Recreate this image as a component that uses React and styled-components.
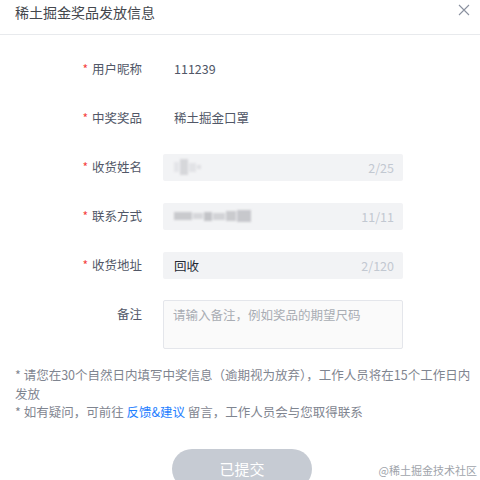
import React from "react";
import styled, { createGlobalStyle } from "styled-components";

const GlobalStyle = createGlobalStyle`
  html, body {
    margin: 0;
    padding: 0;
    background: #fff;
    overflow: hidden;
  }
  body {
    font-family: "Noto Sans CJK SC", "Noto Sans", sans-serif;
  }
`;

const Dialog = styled.div`
  position: relative;
  width: 480px;
  height: 480px;
  overflow: hidden;
  background: #fff;
`;

const Header = styled.div`
  display: flex;
  align-items: flex-start;
  justify-content: space-between;
  height: 35px;
  padding: 1px 10px 0 15px;
  box-sizing: border-box;
  border-bottom: 1px solid #e8eaed;
`;

const Title = styled.div`
  font-size: 14px;
  line-height: 22px;
  color: #44474d;
`;

const Close = styled.div`
  width: 12px;
  height: 12px;
  margin-top: 3px;
  display: flex;
`;

const Form = styled.div`
  display: flex;
  flex-direction: column;
  gap: 21px;
  padding-top: 20px;
`;

const Row = styled.div`
  display: flex;
  align-items: ${p => (p.top ? "flex-start" : "center")};
  min-height: 28px;
`;

const Label = styled.div`
  width: 150px;
  box-sizing: border-box;
  padding-right: 8px;
  text-align: right;
  font-size: 12.5px;
  line-height: 28px;
  color: #515767;
  flex-shrink: 0;
`;

const Star = styled.span`
  color: #f53f3f;
  margin-right: 4px;
  font-size: 12px;
`;

const Value = styled.div`
  margin-left: 13px;
  padding: 0 11px;
  font-size: 12.5px;
  line-height: 28px;
  color: #515767;
`;

const Field = styled.div`
  margin-left: 13px;
  width: 240px;
  height: 27px;
  box-sizing: border-box;
  padding: 0 9px 0 11px;
  border-radius: 2px;
  background: #f2f3f5;
  display: flex;
  align-items: center;
  justify-content: space-between;
  font-size: 12.5px;
  color: #252933;
`;

const Count = styled.span`
  color: #c2c8d1;
  font-size: 12.5px;
`;

const Mosaic = styled.div`
  display: flex;
  align-items: center;
  gap: 1px;
  filter: blur(0.8px);
`;

const Pixel = styled.span`
  display: inline-block;
  width: ${p => p.w}px;
  height: ${p => p.h}px;
  background: ${p => p.c};
`;

const TextArea = styled.div`
  margin-left: 13px;
  width: 240px;
  height: 49px;
  box-sizing: border-box;
  padding: 4px 9px;
  border: 1px solid #e4e6eb;
  border-radius: 2px;
  background: #fafafa;
  font-size: 12.5px;
  line-height: 20px;
  color: #a9adb4;
`;

const Notes = styled.div`
  padding: 17px 8px 0 15px;
  font-size: 12.5px;
  line-height: 18.5px;
  color: #7f8590;
`;

const Link = styled.span`
  color: #1e80ff;
`;

const Footer = styled.div`
  display: flex;
  padding: 27px 0 0 172px;
`;

const SubmitButton = styled.button`
  width: 140px;
  height: 40px;
  border: none;
  border-radius: 20px;
  background: #c6cbd3;
  color: #fff;
  font-family: inherit;
  font-size: 15px;
  line-height: 40px;
  padding: 0;
  cursor: not-allowed;
`;

const Watermark = styled.div`
  position: absolute;
  right: 3px;
  bottom: 2px;
  font-size: 11px;
  color: #a0a4ab;
`;

const nameBlocks = [
  { w: 5, h: 10, c: "#e4e5e8" },
  { w: 8, h: 16, c: "#d6d7da" },
  { w: 7, h: 9, c: "#e2e3e6" },
  { w: 4, h: 4, c: "#dfe0e3" },
];

const phoneBlocks = [
  { w: 18, h: 8, c: "#c9cacd" },
  { w: 10, h: 6, c: "#d6d7da" },
  { w: 8, h: 9, c: "#c3c4c8" },
  { w: 12, h: 7, c: "#d2d3d6" },
  { w: 10, h: 10, c: "#cacbce" },
  { w: 14, h: 12, c: "#c7c8cc" },
];

function CloseIcon() {
  return (
    <svg width="12" height="12" viewBox="0 0 12 12">
      <path d="M1 1L11 11M11 1L1 11" stroke="#8a919f" strokeWidth="1.1" />
    </svg>
  );
}

function FormRow({ label, required, children, top }) {
  return (
    <Row top={top}>
      <Label>
        {required && <Star>*</Star>}
        {label}
      </Label>
      {children}
    </Row>
  );
}

export default function App() {
  return (
    <Dialog>
      <GlobalStyle />
      <Header>
        <Title>稀土掘金奖品发放信息</Title>
        <Close>
          <CloseIcon />
        </Close>
      </Header>
      <Form>
        <FormRow label="用户昵称" required>
          <Value>111239</Value>
        </FormRow>
        <FormRow label="中奖奖品" required>
          <Value>稀土掘金口罩</Value>
        </FormRow>
        <FormRow label="收货姓名" required>
          <Field>
            <Mosaic>
              {nameBlocks.map((b, i) => <Pixel key={i} {...b} />)}
            </Mosaic>
            <Count>2/25</Count>
          </Field>
        </FormRow>
        <FormRow label="联系方式" required>
          <Field>
            <Mosaic>
              {phoneBlocks.map((b, i) => <Pixel key={i} {...b} />)}
            </Mosaic>
            <Count>11/11</Count>
          </Field>
        </FormRow>
        <FormRow label="收货地址" required>
          <Field>
            <span>回收</span>
            <Count>2/120</Count>
          </Field>
        </FormRow>
        <FormRow label="备注" top>
          <TextArea>请输入备注，例如奖品的期望尺码</TextArea>
        </FormRow>
      </Form>
      <Notes>
        <div>* 请您在30个自然日内填写中奖信息（逾期视为放弃），工作人员将在15个工作日内发放</div>
        <div>
          * 如有疑问，可前往 <Link>反馈&amp;建议</Link> 留言，工作人员会与您取得联系
        </div>
      </Notes>
      <Footer>
        <SubmitButton disabled>已提交</SubmitButton>
      </Footer>
      <Watermark>@稀土掘金技术社区</Watermark>
    </Dialog>
  );
}
